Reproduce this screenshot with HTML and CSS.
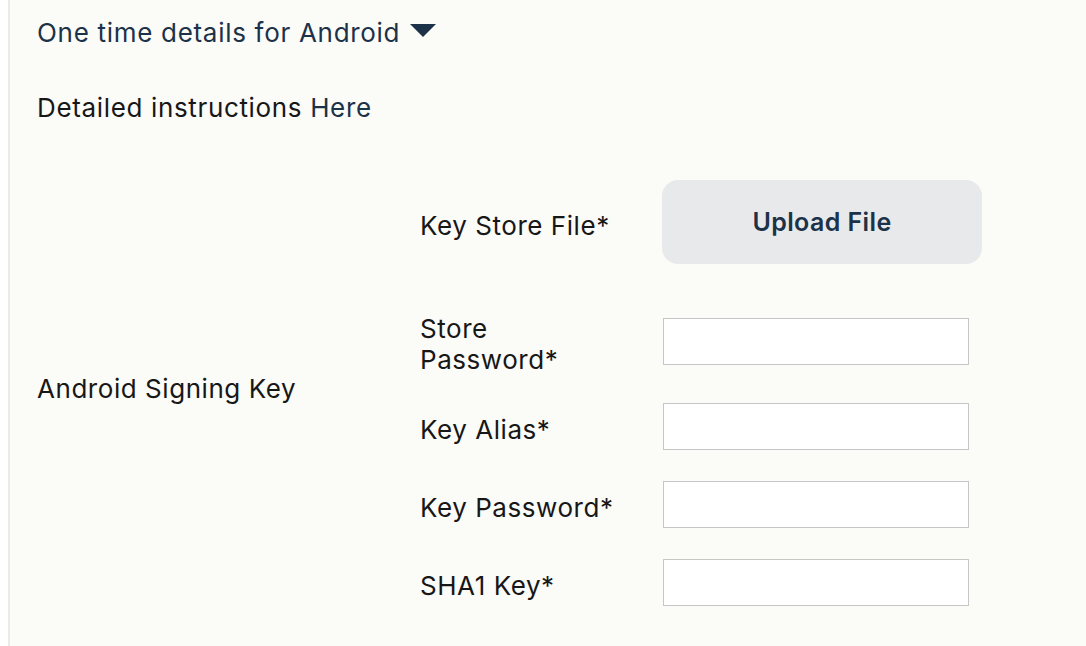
FILE: index.html
```html
<!DOCTYPE html>
<html lang="en">
<head>
    <meta charset="UTF-8">
    <title>One time details for Android</title>
    <link rel="stylesheet" href="styles.css">
</head>
<body>
    <div class="details-panel">
        <div class="details-toggle">
            <span>One time details for Android</span>
            <svg class="caret" width="26" height="13" viewBox="0 0 26 13"><path d="M0 0 H26 L13 13 Z" fill="currentColor"/></svg>
        </div>
        <p class="instructions">Detailed instructions <a href="#">Here</a></p>

        <div class="signing-section">
            <div class="section-label">Android Signing Key</div>
            <div class="field-list">
                <div class="field-row upload-row">
                    <label>Key Store File*</label>
                    <button class="upload-btn">Upload File</button>
                </div>
                <div class="field-row">
                    <label>Store<br>Password*</label>
                    <input type="text">
                </div>
                <div class="field-row">
                    <label>Key Alias*</label>
                    <input type="text">
                </div>
                <div class="field-row">
                    <label>Key Password*</label>
                    <input type="text">
                </div>
                <div class="field-row">
                    <label>SHA1 Key*</label>
                    <input type="text">
                </div>
            </div>
        </div>
    </div>
</body>
</html>
```

FILE: styles.css
```css
body {
    margin: 0 0 0 8px;
    background-color: #ffffff;
    font-family: Inter, "Noto Sans", sans-serif;
    color: #171717;
}

.details-panel {
    background-color: #fbfbf7;
    border-left: 2px solid #ecece6;
    min-height: 646px;
    box-sizing: border-box;
    padding: 16px 0 0 27px;
    font-size: 26px;
    letter-spacing: 0.55px;
}

.details-toggle {
    display: flex;
    align-items: center;
    gap: 10px;
    color: #1c3249;
    line-height: 34px;
    letter-spacing: 0.7px;
}

.caret {
    margin-top: -6px;
}

.instructions {
    margin: 41px 0 0;
    line-height: 34px;
    letter-spacing: 0.65px;
}

.instructions a {
    color: #1c3249;
    text-decoration: none;
}

.signing-section {
    display: flex;
    align-items: center;
    margin-top: 55px;
}

.section-label {
    width: 383px;
    line-height: 32px;
    margin-top: -8px;
}

.field-list {
    display: flex;
    flex-direction: column;
    gap: 31px;
}

.field-row {
    display: flex;
    align-items: center;
}

.upload-row {
    margin-bottom: 15px;
}

.field-row label {
    width: 243px;
    line-height: 31px;
    margin: 3px 0 -3px;
}

.field-row input {
    width: 306px;
    height: 47px;
    box-sizing: border-box;
    border: 1px solid #c6c6c6;
    background-color: #ffffff;
    margin: 0;
}

.upload-btn {
    width: 320px;
    height: 84px;
    border: none;
    border-radius: 16px;
    background-color: #e8e9eb;
    color: #1c3249;
    font-family: Inter, "Noto Sans", sans-serif;
    font-size: 25px;
    font-weight: 600;
    letter-spacing: 0.4px;
    margin-left: -1px;
}
```
